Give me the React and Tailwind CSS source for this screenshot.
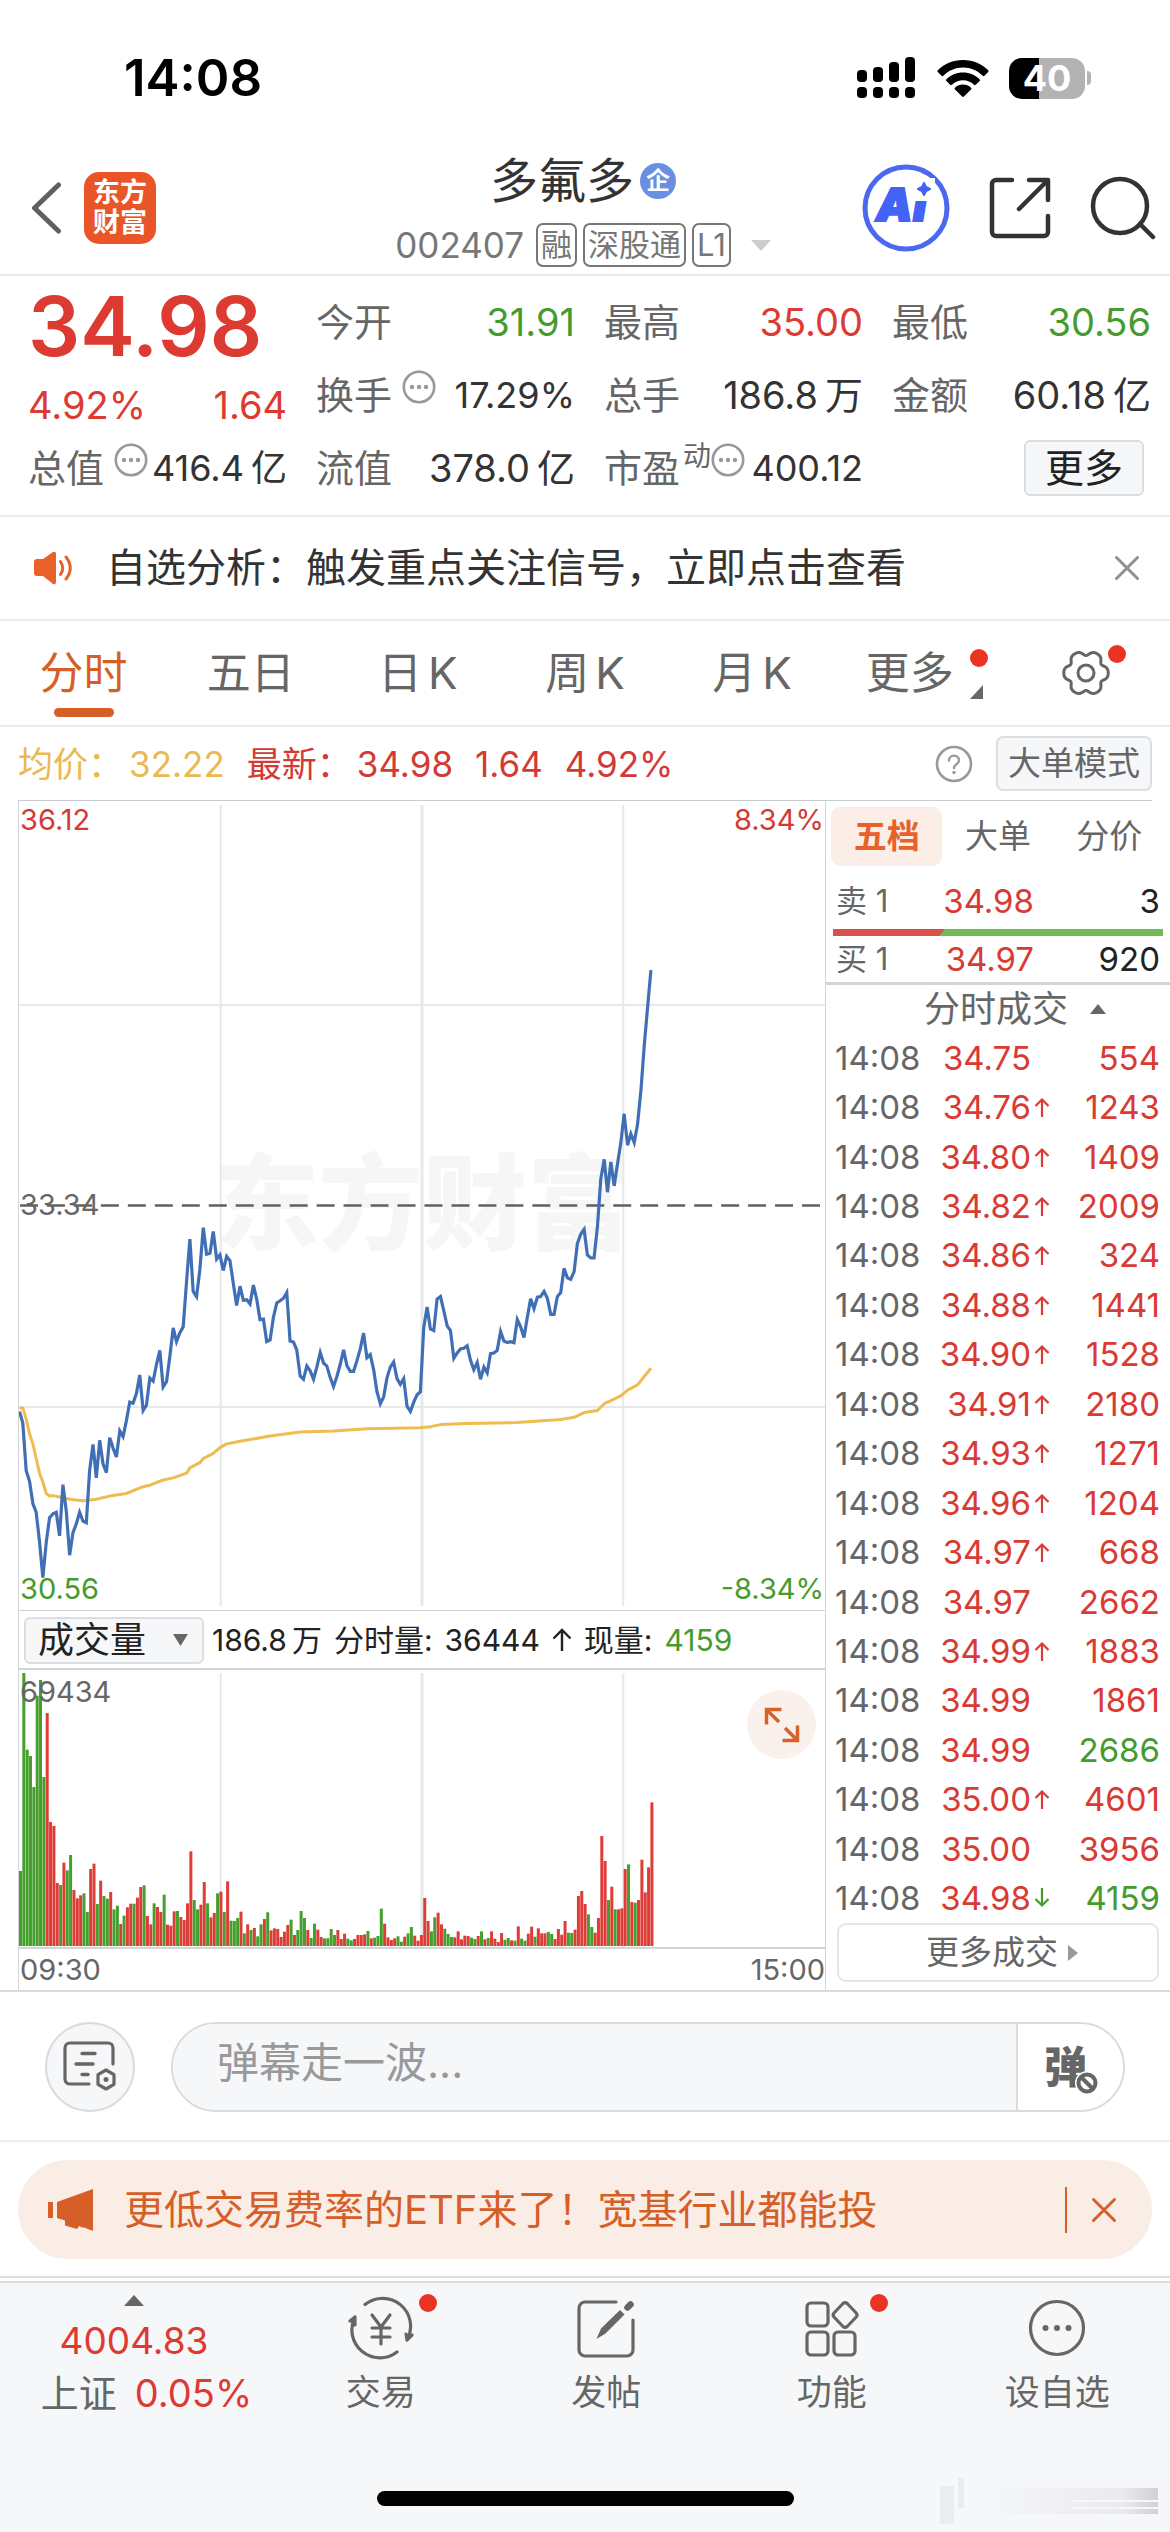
// Página de cotação — 多氟多 (002407)
// Gráfico intradiário, volume por minuto e negócios recentes.

import clsx from "clsx";

const FONT = "font-['Inter','Noto_Sans_CJK_SC',sans-serif]";

// Preço por minuto, medido de cima para baixo na área do gráfico.
const PRECO_TOPO = 21;
const PRECO_ALTURA = 1549;
const PRECOS = [
  1190, 1212, 1303, 1323, 1366, 1383, 1440, 1508, 1440, 1393, 1386, 1383, 1428,
  1330, 1380, 1465, 1422, 1405, 1383, 1400, 1403, 1303, 1253, 1317, 1245, 1290,
  1307, 1240, 1260, 1277, 1227, 1238, 1208, 1172, 1174, 1155, 1120, 1188, 1178,
  1126, 1132, 1100, 1073, 1143, 1133, 1085, 1030, 1056, 1039, 1028, 940, 860,
  960, 970, 918, 838, 889, 887, 845, 898, 890, 920, 893, 901, 945, 987, 950,
  977, 976, 984, 948, 975, 1014, 1013, 1056, 1053, 1010, 982, 978, 973, 962,
  1055, 1057, 1072, 1122, 1128, 1103, 1112, 1128, 1105, 1077, 1097, 1103, 1125,
  1142, 1123, 1100, 1072, 1102, 1113, 1113, 1093, 1070, 1040, 1087, 1081, 1110,
  1152, 1175, 1162, 1125, 1105, 1095, 1127, 1138, 1127, 1180, 1190, 1172, 1158,
  1152, 1030, 990, 1032, 1035, 975, 970, 997, 1026, 1035, 1088, 1078, 1070,
  1069, 1064, 1092, 1110, 1096, 1128, 1105, 1116, 1079, 1078, 1073, 1037, 1055,
  1058, 1056, 1058, 1014, 1028, 1048, 1010, 974, 993, 971, 970, 960, 973, 1004,
  1004, 970, 962, 916, 934, 937, 922, 868, 850, 841, 890, 896, 896, 835, 745,
  707, 770, 712, 758, 715, 675, 620, 680, 658, 675, 640, 575, 490, 415, 345,
];

// Preço médio: [minuto, posição]
const MEDIA = [
  [0, 1183], [1, 1183], [2, 1205], [3, 1232], [4, 1252], [5, 1280], [6, 1308],
  [7, 1325], [8, 1347], [9, 1352], [10, 1351], [13, 1355], [15, 1358],
  [19, 1361], [23, 1358], [27, 1352], [32, 1347], [37, 1334], [39, 1331],
  [43, 1321], [46, 1317], [50, 1308], [51, 1298], [54, 1288], [55, 1280],
  [58, 1270], [60, 1259], [62, 1252], [66, 1247], [75, 1237], [84, 1229],
  [94, 1227], [104, 1223], [120, 1221], [123, 1219], [126, 1215], [134, 1213],
  [149, 1211], [162, 1205], [166, 1201], [169, 1192], [173, 1188], [175, 1175],
  [177, 1169], [180, 1160], [182, 1149], [185, 1139], [187, 1123], [189, 1107],
];

const VOLUMES = [
  225, 819, 589, 570, 477, 751, 798, 507, 699, 372, 360, 189, 183, 250, 227,
  273, 168, 143, 152, 158, 102, 231, 247, 126, 196, 150, 142, 162, 110, 121, 66,
  91, 116, 127, 127, 145, 177, 182, 90, 65, 128, 117, 102, 154, 64, 61, 104,
  105, 87, 78, 128, 284, 138, 110, 124, 192, 128, 86, 99, 158, 163, 102, 194,
  76, 75, 84, 103, 38, 65, 48, 54, 29, 65, 81, 101, 47, 53, 51, 27, 43, 63, 79,
  33, 48, 105, 84, 48, 24, 67, 49, 27, 23, 23, 51, 33, 48, 21, 37, 22, 17, 21,
  33, 33, 35, 45, 23, 25, 30, 112, 67, 26, 18, 23, 29, 13, 28, 38, 57, 31, 16,
  33, 144, 75, 44, 86, 100, 65, 52, 36, 27, 26, 44, 20, 31, 30, 25, 21, 30, 44,
  20, 24, 44, 22, 12, 39, 19, 24, 17, 16, 59, 22, 16, 37, 58, 28, 53, 38, 38,
  42, 36, 21, 51, 34, 75, 40, 39, 49, 150, 165, 126, 95, 57, 40, 84, 330, 255,
  138, 178, 110, 110, 113, 231, 245, 132, 130, 138, 259, 161, 236, 431,
];

// r = alta, g = baixa; um caractere por minuto.
const SINAIS =
  "ggggggggrrrrgrggrrrggrrgrggrggrgrrgrrgrrgrrgrrrgrrrrggrrgrrg" +
  "rgrgggrgrgrggrgrrrrrrgrgggrggrrggggrrrggrrrrgrgggrrrrggrggrr" +
  "rrrggrrgggrrrrrggrgrgrrrrggrgrggrrgrrrggrrrrggrrrrggrrrrgrgrrrgrgrrrrr";

const NEGOCIOS = [
  ["34.75", "", "554"],
  ["34.76", "up", "1243"],
  ["34.80", "up", "1409"],
  ["34.82", "up", "2009"],
  ["34.86", "up", "324"],
  ["34.88", "up", "1441"],
  ["34.90", "up", "1528"],
  ["34.91", "up", "2180"],
  ["34.93", "up", "1271"],
  ["34.96", "up", "1204"],
  ["34.97", "up", "668"],
  ["34.97", "", "2662"],
  ["34.99", "up", "1883"],
  ["34.99", "", "1861"],
  ["34.99", "", "2686", "venda"],
  ["35.00", "up", "4601"],
  ["35.00", "", "3956"],
  ["34.98", "down", "4159", "venda"],
];

const PERIODOS = ["分时", "五日", "日K", "周K", "月K"];

const PASSO = 3.345;

function pontosPreco(pares) {
  return pares
    .map(([minuto, valor]) => {
      const x = 0.5 + minuto * PASSO;
      const y = ((valor - PRECO_TOPO) * 809) / PRECO_ALTURA;
      return `${x.toFixed(1)},${y.toFixed(1)}`;
    })
    .join(" ");
}

function contornoEngrenagem() {
  return Array.from({ length: 72 }, (_, i) => {
    const a = (i * Math.PI) / 36;
    const r = 20.4 + 2.4 * Math.cos(6 * a) - 0.6 * Math.cos(12 * a);
    return `${(25 + r * Math.cos(a)).toFixed(2)},${(25 + r * Math.sin(a)).toFixed(2)}`;
  }).join(" ");
}

function Mais() {
  return (
    <svg viewBox="0 0 34 34" className="h-[34px] w-[34px] shrink-0" aria-hidden="true">
      <circle cx="17" cy="17" r="15.2" fill="none" stroke="#999" strokeWidth="2.6" />
      <circle cx="10" cy="17" r="2.2" fill="#999" />
      <circle cx="17" cy="17" r="2.2" fill="#999" />
      <circle cx="24" cy="17" r="2.2" fill="#999" />
    </svg>
  );
}

function Fechar({ className }) {
  return (
    <svg viewBox="0 0 26 26" className={clsx("h-[26px] w-[26px]", className)} aria-hidden="true">
      <path d="M2.5 2.5 23.5 23.5M23.5 2.5 2.5 23.5" stroke="currentColor" strokeWidth="3" strokeLinecap="round" />
    </svg>
  );
}

function BarraStatus() {
  return (
    <div className="flex items-center justify-between pt-[48px] pr-[79px] pl-[124px] text-black">
      <span className="text-[51px] leading-[60px] font-semibold">14:08</span>
      <div className="flex items-center gap-[20px]">
        <svg viewBox="0 0 60 42" className="h-[42px] w-[60px]" aria-hidden="true">
          <rect x="0" y="13" width="10" height="12" rx="4" />
          <rect x="16" y="10" width="10" height="15" rx="4" />
          <rect x="32" y="5" width="10" height="20" rx="4" />
          <rect x="48" y="0" width="10" height="25" rx="4" />
          <rect x="0" y="30" width="10" height="11" rx="4" />
          <rect x="16" y="30" width="10" height="11" rx="4" />
          <rect x="32" y="30" width="10" height="11" rx="4" />
          <rect x="48" y="30" width="10" height="11" rx="4" />
        </svg>
        <svg viewBox="0 0 52 38" className="h-[38px] w-[52px]" aria-hidden="true">
          <path d="M26 1C16 1 7 5 .8 11.200a1.300 1.300 0 0 0 0 1.800l3.700 3.700a1.300 1.300 0 0 0 1.800 0C11.500 11.600 18.400 8.500 26 8.500s14.500 3.100 19.700 8.200a1.300 1.300 0 0 0 1.800 0l3.700-3.700a1.300 1.300 0 0 0 0-1.800C45 5 36 1 26 1Z" />
          <path d="M26 13.500c-6.500 0-12.300 2.500-16.600 6.700a1.300 1.300 0 0 0 0 1.800l3.800 3.700a1.300 1.300 0 0 0 1.800 0c2.900-2.800 6.800-4.500 11-4.500s8.100 1.700 11 4.500a1.300 1.300 0 0 0 1.800 0l3.800-3.700a1.300 1.300 0 0 0 0-1.800c-4.300-4.200-10.100-6.700-16.600-6.700Z" />
          <path d="M26 25.500c-3.100 0-5.900 1.200-8 3.200a1.300 1.300 0 0 0 0 1.800l7.100 7a1.300 1.300 0 0 0 1.800 0l7.100-7a1.300 1.300 0 0 0 0-1.800c-2.100-2-4.900-3.200-8-3.200Z" />
        </svg>
        <div className="flex items-center gap-[2px]">
          <div className="flex h-[41px] w-[76px] items-center justify-center rounded-[13px] bg-linear-to-r from-black from-40% to-[#b3b3b3] to-40%">
            <span className="text-[36px] leading-[40px] font-bold text-white">40</span>
          </div>
          <div className="h-[14px] w-[4px] rounded-r-full bg-[#b3b3b3]" />
        </div>
      </div>
    </div>
  );
}

function Cabecalho() {
  return (
    <header className="grid grid-cols-[1fr_auto_1fr] items-center border-b-2 border-[#e9e9e9] pt-[41px] pr-[14px] pb-[7px] pl-[30px]">
      <div className="flex items-center gap-[22px]">
        <button type="button" aria-label="返回">
          <svg viewBox="0 0 32 52" className="h-[52px] w-[32px]" fill="none" aria-hidden="true">
            <path d="M28.500 3 4.500 26 28.500 49" stroke="#606060" strokeWidth="5" strokeLinecap="round" strokeLinejoin="round" />
          </svg>
        </button>
        <a href="#inicio" className="flex h-[72px] w-[72px] flex-col items-center justify-center rounded-[15px] bg-[#ea5527] text-[27px] leading-[30px] font-bold text-white">
          <span>东方</span>
          <span>财富</span>
        </a>
      </div>

      <div className="flex flex-col items-center pr-[20px]">
        <div className="flex items-center gap-[6px]">
          <h1 className="text-[48px] leading-[64px] text-[#333]">多氟多</h1>
          <span className="flex h-[36px] w-[36px] items-center justify-center rounded-full bg-[#6a8ee0] text-[24px] leading-[36px] font-bold text-white">
            企
          </span>
        </div>
        <div className="mt-[10px] flex items-center gap-[6px] text-[#777]">
          <span className="mr-[6px] text-[35px] leading-[44px]">002407</span>
          {["融", "深股通", "L1"].map((etiqueta) => (
            <span key={etiqueta} className="rounded-[7px] border-2 border-[#777] px-[3px] text-[31px] leading-[40px]">
              {etiqueta}
            </span>
          ))}
          <svg viewBox="0 0 20 11" className="ml-[14px] h-[11px] w-[20px]" aria-hidden="true">
            <path d="M0 0h20L10 11Z" fill="#ccc" />
          </svg>
        </div>
      </div>

      <div className="flex items-center justify-end gap-[38px]">
        <button type="button" aria-label="Ai">
          <svg viewBox="0 0 88 88" className="h-[88px] w-[88px]" aria-hidden="true">
            <circle cx="44" cy="44" r="41" fill="#fff" stroke="#4a68f0" strokeWidth="5" />
            <text y="57" fill="#4263f5" stroke="#4263f5" strokeWidth="2" fontSize="46" fontWeight="900" fontStyle="italic">
              <tspan x="14">A</tspan>
              <tspan x="51">i</tspan>
            </text>
            <path d="M51 14h22v23H51Z" fill="#fff" />
            <path d="m62 19 2 4 4 2-4 2-2 4-2-4-4-2 4-2Z" fill="#4263f5" stroke="#4263f5" strokeWidth="2" strokeLinejoin="round" />
          </svg>
        </button>
        <button type="button" aria-label="分享">
          <svg viewBox="0 0 64 64" className="h-[64px] w-[64px]" fill="none" stroke="#333" strokeWidth="4.500" strokeLinecap="round" strokeLinejoin="round" aria-hidden="true">
            <path d="M24 4H8a4 4 0 0 0-4 4v48a4 4 0 0 0 4 4h48a4 4 0 0 0 4-4V40" />
            <path d="M41 4h19v20M59 5 31 33" />
          </svg>
        </button>
        <button type="button" aria-label="搜索">
          <svg viewBox="0 0 66 64" className="h-[64px] w-[66px]" fill="none" stroke="#333" strokeWidth="4.500" strokeLinecap="round" aria-hidden="true">
            <circle cx="30" cy="30" r="27" />
            <path d="M50 48 63 61" />
          </svg>
        </button>
      </div>
    </header>
  );
}

function Campo({ rotulo, valor, unidade, cor = "text-[#333]", menor = false, info = false, sobre }) {
  return (
    <div className="flex h-[56px] items-center justify-between whitespace-nowrap">
      <dt className="flex items-center text-[38px] leading-[56px] text-[#666]">
        {rotulo}
        {sobre && <span className="mb-[24px] ml-[3px] text-[28px] leading-[32px]">{sobre}</span>}
        {info && (
          <span className={clsx("mb-[16px]", !sobre && "ml-[10px]")}>
            <Mais />
          </span>
        )}
      </dt>
      <dd className={clsx("flex gap-[7px]", cor, menor ? "text-[36px] leading-[56px]" : "text-[38px] leading-[56px]")}>
        {valor}
        {unidade && <span>{unidade}</span>}
      </dd>
    </div>
  );
}

function Cotacao() {
  return (
    <section className="border-b-2 border-[#ebebeb] pt-[18px] pr-[19px] pb-[19px] pl-[28px]">
      <dl className="grid grid-cols-4 gap-x-[29px] gap-y-[17px]">
        <div className="row-span-2 text-[#dd3a31]">
          <dt className="text-[82px] leading-[66px] font-semibold">34.98</dt>
          <dd className="mt-[27px] flex justify-between text-[38px] leading-[36px]">
            <span>4.92%</span>
            <span>1.64</span>
          </dd>
        </div>
        <Campo rotulo="今开" valor="31.91" cor="text-[#459b2d]" />
        <Campo rotulo="最高" valor="35.00" cor="text-[#dd3a31]" />
        <Campo rotulo="最低" valor="30.56" cor="text-[#459b2d]" />
        <Campo rotulo="换手" valor="17.29%" menor info />
        <Campo rotulo="总手" valor="186.8" unidade="万" />
        <Campo rotulo="金额" valor="60.18" unidade="亿" />
        <Campo rotulo="总值" valor="416.4" unidade="亿" menor info />
        <Campo rotulo="流值" valor="378.0" unidade="亿" />
        <Campo rotulo="市盈" sobre="动" valor="400.12" menor info />
        <div className="flex justify-end pr-[7px]">
          <button type="button" className="h-[56px] rounded-[6px] border-2 border-[#dcdee1] bg-[#f6f7f9] px-[19px] text-[39px] leading-[50px] text-[#222]">
            更多
          </button>
        </div>
      </dl>
    </section>
  );
}

function Aviso() {
  return (
    <section className="flex items-center border-b-2 border-[#ebebeb] py-[21px] pr-[30px] pl-[34px]">
      <svg viewBox="0 0 40 34" className="h-[34px] w-[40px]" aria-hidden="true">
        <path d="M0 11a3 3 0 0 1 3-3h6L19 1a2 2 0 0 1 3 2v28a2 2 0 0 1-3 2L9 25H3a3 3 0 0 1-3-3Z" fill="#ea602b" />
        <path d="M26.500 10.500q4.500 6.500 0 13M32 6q8.500 11 0 22" fill="none" stroke="#ea602b" strokeWidth="3" strokeLinecap="round" />
      </svg>
      <p className="ml-[32px] flex-1 text-[40px] leading-[60px] text-[#333]">
        自选分析：触发重点关注信号，立即点击查看
      </p>
      <button type="button" aria-label="关闭提示" className="text-[#8f8f8f]">
        <Fechar />
      </button>
    </section>
  );
}

function Periodos() {
  return (
    <nav className="grid grid-cols-7 border-b-2 border-[#ebebeb] pt-[17px] pb-[8px] text-[44px] text-[#666]">
      {PERIODOS.map((periodo, indice) => (
        <button key={periodo} type="button" className={clsx("flex flex-col items-center", indice === 0 && "text-[#d65f28]")}>
          <span className="flex gap-[6px] leading-[70px]">
            {periodo.endsWith("K") ? [...periodo].map((letra) => <span key={letra}>{letra}</span>) : periodo}
          </span>
          {indice === 0 && <span className="h-[9px] w-[60px] rounded-full bg-[#d65f28]" />}
        </button>
      ))}
      <button type="button" className="flex h-[70px] items-center justify-center gap-[16px] pl-[10px]">
        <span className="leading-[70px]">更多</span>
        <span className="flex flex-col items-center gap-[18px] pt-[1px]">
          <span className="-mr-[6px] h-[18px] w-[18px] rounded-full bg-[#ea3323]" />
          <svg viewBox="0 0 13 14" className="h-[14px] w-[13px]" aria-hidden="true">
            <path d="M13 0v14H0Z" fill="#666" />
          </svg>
        </span>
      </button>
      <button type="button" aria-label="设置" className="relative flex h-[70px] items-center justify-center">
        <svg viewBox="0 0 50 50" className="h-[50px] w-[50px]" fill="none" stroke="#666" strokeWidth="3" strokeLinejoin="round" aria-hidden="true">
          <polygon points={contornoEngrenagem()} />
          <circle cx="25" cy="25" r="8" />
        </svg>
        <span className="absolute top-[7px] right-[44px] h-[18px] w-[18px] rounded-full bg-[#ea3323]" />
      </button>
    </nav>
  );
}

function Resumo() {
  return (
    <div className="mx-[18px] flex items-center border-b border-[#c9cdd0] py-[9px] text-[35px] leading-[54px]">
      <span className="text-[#eab950]">均价：</span>
      <span className="ml-[6px] text-[#eab950]">32.22</span>
      <span className="ml-[22px] text-[#d33a35]">最新：</span>
      <span className="ml-[5px] text-[#d33a35]">34.98</span>
      <span className="ml-[22px] text-[#d33a35]">1.64</span>
      <span className="ml-[22px] text-[#d33a35]">4.92%</span>
      <button type="button" aria-label="帮助" className="ml-auto">
        <svg viewBox="0 0 38 38" className="h-[38px] w-[38px]" aria-hidden="true">
          <circle cx="19" cy="19" r="17" fill="none" stroke="#999" strokeWidth="2.600" />
          <path d="M14 15.500c0-6.500 10-6.500 10 0 0 3.500-5 3.800-5 7.500" fill="none" stroke="#999" strokeWidth="2.400" strokeLinecap="round" />
          <circle cx="19" cy="27.500" r="1.700" fill="#999" />
        </svg>
      </button>
      <button type="button" className="ml-[23px] rounded-[7px] border-2 border-[#dcdee1] bg-[#f6f7f9] px-[10px] text-[33px] leading-[51px] text-[#666]">
        大单模式
      </button>
    </div>
  );
}

function GraficoPreco() {
  return (
    <div className="relative border-b border-[#d2d4d6] text-[29px] leading-[34px]">
      <span className="absolute top-[348px] left-[196px] text-[104px] leading-[110px] font-black text-[#f6f6f7]" aria-hidden="true">
        东方财富
      </span>
      <svg viewBox="0 0 807 809" preserveAspectRatio="none" className="relative block h-[809px] w-full" fill="none">
        <g stroke="#e6e8ea" strokeWidth="2">
          <path d="M0 204H807M0 606H807M202 4V805M605 4V805" />
          <path d="M403.500 4V805" strokeWidth="3" />
        </g>
        <path d="M1 404.500H807" stroke="#606060" strokeWidth="2.600" strokeDasharray="18 9" />
        <polyline points={pontosPreco(MEDIA)} stroke="#efbc50" strokeWidth="3" strokeLinejoin="round" />
        <polyline points={pontosPreco(PRECOS.map((valor, i) => [i, valor]))} stroke="#416fb5" strokeWidth="3.200" />
      </svg>
      <span className="absolute top-[2px] left-px text-[#d33a35]">36.12</span>
      <span className="absolute top-[2px] right-px text-[#d33a35]">8.34%</span>
      <span className="absolute top-[387px] left-px text-[#666]">33.34</span>
      <span className="absolute bottom-[4px] left-px text-[#459b2d]">30.56</span>
      <span className="absolute right-px bottom-[4px] text-[#459b2d]">-8.34%</span>
    </div>
  );
}

function GraficoVolume() {
  return (
    <div className="relative border-b-2 border-[#d2d4d6] text-[29px] leading-[34px]">
      <svg viewBox="0 0 807 277" preserveAspectRatio="none" className="block h-[277px] w-full">
        <path d="M202 3V277M605 3V277" stroke="#e6e8ea" strokeWidth="2" />
        <path d="M403.500 3V277" stroke="#e6e8ea" strokeWidth="3" />
        {VOLUMES.map((volume, i) => (
          <rect
            key={i}
            x={i * PASSO}
            y={276 - volume / 3}
            width="3"
            height={volume / 3}
            fill={SINAIS[i] === "g" ? "#459f2c" : "#dd3d36"}
          />
        ))}
      </svg>
      <span className="absolute top-[5px] left-px text-[#666]">69434</span>
      <button type="button" aria-label="全屏" className="absolute top-[20px] right-[9px] flex h-[69px] w-[69px] items-center justify-center rounded-full bg-[#fbf1ec]">
        <svg viewBox="0 0 36 36" className="h-[36px] w-[36px]" fill="none" stroke="#d96127" strokeWidth="3.500" aria-hidden="true">
          <path d="M17.500 2.500H2.500V17.500M2.500 2.500 15 15M33.500 18.500V33.500H18.500M33.500 33.500 21 21" />
        </svg>
      </button>
    </div>
  );
}

function PainelGraficos() {
  return (
    <div className="min-w-0 flex-1 border-x border-[#d2d4d6]">
      <GraficoPreco />
      <div className="flex items-center border-b-2 border-[#d2d4d6] pt-[5px] pb-[4px] pl-[5px] text-[30px] leading-[48px] whitespace-nowrap text-[#222]">
        <div className="relative mr-[8px]">
          <select aria-label="指标" className="block w-[180px] appearance-none rounded-[6px] border-2 border-[#dcdee1] bg-[#f6f7f9] pl-[12px] text-[36px] leading-[43px] text-[#222]">
            <option>成交量</option>
          </select>
          <svg viewBox="0 0 15 12" className="pointer-events-none absolute top-[17px] right-[16px] h-[12px] w-[15px]" aria-hidden="true">
            <path d="M0 0h15L7.500 12Z" fill="#666" />
          </svg>
        </div>
        <span>186.8</span>
        <span className="ml-[5px]">万</span>
        <span className="ml-[12px]">分时量:</span>
        <span className="ml-[12px]">36444</span>
        <svg viewBox="0 0 20 24" className="mx-[12px] h-[24px] w-[20px]" fill="none" stroke="#222" strokeWidth="2.400" aria-hidden="true">
          <path d="M10 23V2M1.500 10.500 10 2l8.500 8.500" />
        </svg>
        <span>现量:</span>
        <span className="ml-[12px] text-[#459b2d]">4159</span>
      </div>
      <GraficoVolume />
      <div className="flex justify-between pl-px text-[29px] leading-[41px] text-[#666]">
        <span>09:30</span>
        <span>15:00</span>
      </div>
    </div>
  );
}

function Seta({ direcao }) {
  if (!direcao) return null;
  return (
    <svg
      viewBox="0 0 16 20"
      className={clsx("h-[20px] w-[16px]", direcao === "up" ? "text-[#d93a33]" : "rotate-180 text-[#459b2d]")}
      fill="none"
      stroke="currentColor"
      strokeWidth="2.200"
      aria-hidden="true"
    >
      <path d="M8 20V2.500M1.500 9 8 2.500 14.500 9" />
    </svg>
  );
}

function Oferta({ rotulo, preco, quantidade, className }) {
  return (
    <div className={clsx("flex px-[10px] text-[33px]", className)}>
      <span className="w-[98px] text-[31px] text-[#666]">{rotulo}</span>
      <span className="w-[100px] text-right text-[#d93a33]">{preco}</span>
      <span className="flex-1 text-right text-[#222]">{quantidade}</span>
    </div>
  );
}

function PainelNegocios() {
  return (
    <aside className="flex w-[344px] flex-col">
      <div className="grid grid-cols-3 px-[5px] pt-[6px] text-[33px] leading-[59px] text-[#666]">
        <button type="button" className="rounded-[9px] bg-[#faeee6] font-bold text-[#ea602b]">五档</button>
        <button type="button">大单</button>
        <button type="button">分价</button>
      </div>
      <Oferta rotulo="卖 1" preco="34.98" quantidade="3" className="mt-[7px] leading-[56px]" />
      <svg viewBox="0 0 330 7" preserveAspectRatio="none" className="mx-[7px] h-[7px]" aria-hidden="true">
        <path d="M0 0H330V7H0Z" fill="#72b955" />
        <path d="M0 0H112L106 7H0Z" fill="#d8514b" />
      </svg>
      <Oferta rotulo="买 1" preco="34.97" quantidade="920" className="border-b-3 border-[#d2d4d6] leading-[46px]" />
      <button type="button" className="flex items-center justify-center gap-[22px] pl-[34px] text-[36px] leading-[48px] text-[#666]">
        分时成交
        <svg viewBox="0 0 16 10" className="h-[10px] w-[16px]" aria-hidden="true">
          <path d="M0 10h16L8 0Z" fill="#666" />
        </svg>
      </button>
      <table className="h-[890px] w-full text-[33px] leading-[48px]">
        <tbody>
          {NEGOCIOS.map(([preco, direcao, quantidade, lado], i) => (
            <tr key={i}>
              <td className="w-[108px] p-0 pl-[9px] text-[#666]">14:08</td>
              <td className="w-[97px] p-0 text-right text-[#d93a33]">{preco}</td>
              <td className="w-[20px] p-0 pl-[3px]">
                <Seta direcao={direcao} />
              </td>
              <td className={clsx("p-0 pr-[10px] text-right", lado === "venda" ? "text-[#459b2d]" : "text-[#d93a33]")}>
                {quantidade}
              </td>
            </tr>
          ))}
        </tbody>
      </table>
      <button type="button" className="mx-[11px] mb-[8px] flex items-center justify-center gap-[10px] rounded-[9px] border-2 border-[#e6e6e6] pl-[8px] text-[33px] leading-[55px] text-[#666]">
        更多成交
        <svg viewBox="0 0 10 16" className="h-[16px] w-[10px]" aria-hidden="true">
          <path d="M0 0v16l10-8Z" fill="#999" />
        </svg>
      </button>
    </aside>
  );
}

function Comentario() {
  return (
    <form className="flex items-center border-b-2 border-[#eee] pt-[30px] pr-[45px] pb-[28px] pl-[45px]" onSubmit={(e) => e.preventDefault()}>
      <button type="button" aria-label="弹幕设置" className="flex h-[90px] w-[90px] items-center justify-center rounded-full border-2 border-[#d9dbdd] bg-[#f6f7f9]">
        <svg viewBox="0 0 56 52" className="h-[52px] w-[56px]" fill="none" stroke="#666" strokeWidth="3.200" strokeLinecap="round" aria-hidden="true">
          <path d="M27 43H8a5 5 0 0 1-5-5V7a5 5 0 0 1 5-5H46a5 5 0 0 1 5 5V23" />
          <path d="M20 12.500H33M14 23H31M20 33.500H26" strokeWidth="3.400" />
          <path d="m44 29 8 4.700v9.600L44 48l-8-4.700v-9.600Z" strokeLinejoin="round" />
          <circle cx="44" cy="38.500" r="2.500" fill="#666" stroke="none" />
        </svg>
      </button>
      <div className="ml-[36px] flex flex-1 overflow-hidden rounded-full border-2 border-[#d9dbdd]">
        <input
          type="text"
          aria-label="弹幕"
          placeholder="弹幕走一波..."
          className="h-[86px] min-w-0 flex-1 bg-[#f6f7f9] pb-[10px] pl-[44px] text-[42px] leading-[60px] outline-none placeholder:text-[#999]"
        />
        <button type="button" aria-label="关闭弹幕" className="relative w-[107px] border-l-2 border-[#d9dbdd] bg-white pr-[10px] text-[43px] leading-[80px] font-black text-[#666]">
          弹
          <svg viewBox="0 0 24 24" className="absolute right-[24px] bottom-[15px] h-[24px] w-[24px]" aria-hidden="true">
            <circle cx="12" cy="12" r="8.500" fill="#fff" stroke="#fff" strokeWidth="7" />
            <circle cx="12" cy="12" r="8.500" fill="#fff" stroke="#666" strokeWidth="4" />
            <path d="m6.500 6.500 11 11" stroke="#666" strokeWidth="4" />
          </svg>
        </button>
      </div>
    </form>
  );
}

function Promocao() {
  return (
    <div className="border-b-2 border-[#dfdfdf] px-[18px] pt-[18px] pb-[17px]">
      <div className="flex items-center rounded-full bg-[#faede5] pr-[35px] pl-[29px] text-[#d65f28]">
        <svg viewBox="0 0 48 42" className="h-[42px] w-[48px]" fill="#d65f28" aria-hidden="true">
          <path d="M1 13h5v16H1ZM10 13 46 0v42L37 38.500l-2 0L34 38 32 37l-2 3-12-3.500v-5L10 29Z" />
        </svg>
        <p className="ml-[29px] flex-1 text-[40px] leading-[99px]">更低交易费率的ETF来了！宽基行业都能投</p>
        <span className="mr-[24px] h-[46px] w-[2px] bg-[#d65f28]" />
        <button type="button" aria-label="关闭">
          <Fechar className="text-[#d65f28]" />
        </button>
      </div>
    </div>
  );
}

function Atalho({ rotulo, novo = false, children }) {
  return (
    <a href={`#${rotulo}`} className="relative flex flex-1 flex-col items-center pt-[13px] text-[35px] leading-[64px] text-[#666]">
      <svg viewBox="0 0 66 64" className="h-[64px] w-[66px]" fill="none" stroke="#666" strokeWidth="3.200" strokeLinecap="round" strokeLinejoin="round" aria-hidden="true">
        {children}
      </svg>
      {rotulo}
      {novo && <span className="absolute top-[11px] left-1/2 ml-[38px] h-[18px] w-[18px] rounded-full bg-[#ea3323]" />}
    </a>
  );
}

function BarraInferior() {
  return (
    <footer className="mt-[3px] flex-1 border-t-2 border-[#dcdcdc] bg-[#f6f7f9]">
      <div className="flex">
        <a href="#indice" className="flex w-[268px] flex-col items-center pt-[12px] text-[38px] leading-[52px] text-[#dd3a31]">
          <svg viewBox="0 0 20 11" className="mb-[9px] h-[11px] w-[20px]" aria-hidden="true">
            <path d="M0 11h20L10 0Z" fill="#666" />
          </svg>
          <span className="text-[37px]">4004.83</span>
          <span className="ml-[25px] flex gap-[18px]">
            <span className="text-[#666]">上证</span>
            <span>0.05%</span>
          </span>
        </a>
        <Atalho rotulo="交易" novo>
          <path d="M17 8.500A28 28 0 0 1 59 44M59 44l-1-6M59 44l5-5M49 56A28 28 0 0 1 7 21M7 21l-5 4M7 21v8" />
          <path d="m24 19 9 12 9-12M24 32h18M24 41h18M33 32v16" />
        </Atalho>
        <Atalho rotulo="发帖">
          <path d="M43 6H12a6 6 0 0 0-6 6v42a6 6 0 0 0 6 6h42a6 6 0 0 0 6-6V24" />
          <path d="M23.500 43 28 32.500 47 14l4.500 4.500-19 19Z" fill="#666" stroke="none" />
          <path d="m54.500 11.500 3-3" strokeWidth="6.500" />
        </Atalho>
        <Atalho rotulo="功能" novo>
          <rect x="8" y="7" width="21" height="23" rx="4" />
          <rect x="8" y="36" width="21" height="23" rx="4" />
          <rect x="35" y="36" width="21" height="23" rx="4" />
          <path d="M44 7.500a3 3 0 0 1 4.200 0l9 9.500a3 3 0 0 1 0 4l-9 9.500a3 3 0 0 1-4.200 0l-9-9.500a3 3 0 0 1 0-4Z" />
        </Atalho>
        <Atalho rotulo="设自选">
          <circle cx="33" cy="32" r="26.500" />
          <g fill="#666" stroke="none">
            <circle cx="21.500" cy="32" r="3" />
            <circle cx="33" cy="32" r="3" />
            <circle cx="44.500" cy="32" r="3" />
          </g>
        </Atalho>
      </div>
      <div className="relative mt-[67px] pb-[22px]">
        <div className="mx-auto h-[15px] w-[417px] rounded-full bg-black" />
        <svg viewBox="0 0 240 46" className="absolute right-[8px] bottom-[4px] h-[46px] w-[240px]" aria-hidden="true">
          <defs>
            <linearGradient id="marca">
              <stop offset="0" stopColor="#8a8a8a" stopOpacity="0" />
              <stop offset="0.800" stopColor="#8a8a8a" stopOpacity="0.120" />
              <stop offset="1" stopColor="#8a8a8a" stopOpacity="0.350" />
            </linearGradient>
          </defs>
          <path d="M18 8h14v38H18ZM36 0h6v30H36Z" fill="#ebecee" />
          <path d="M60 10H236v26H60Z" fill="url(#marca)" />
          <path d="M150 22H236v2H150ZM150 29H236v2H150Z" fill="#f6f7f9" />
        </svg>
      </div>
    </footer>
  );
}

export default function App() {
  return (
    <div className={clsx("flex min-h-screen w-full flex-col bg-white", FONT)}>
      <BarraStatus />
      <Cabecalho />
      <main>
        <Cotacao />
        <Aviso />
        <Periodos />
        <Resumo />
        <section className="flex border-b-2 border-[#d9dbdd] pl-[18px]">
          <PainelGraficos />
          <PainelNegocios />
        </section>
        <Comentario />
        <Promocao />
      </main>
      <BarraInferior />
    </div>
  );
}
